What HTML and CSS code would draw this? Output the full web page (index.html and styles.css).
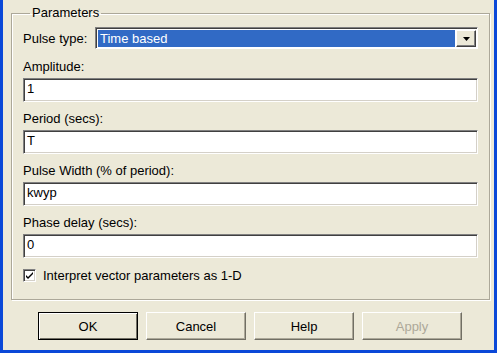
FILE: index.html
```html
<!DOCTYPE html>
<html lang="en">
<head>
  <meta charset="UTF-8" />
  <title>Block Parameters: Pulse Generator</title>
  <link rel="stylesheet" href="styles.css">
</head>
<body>
  <div class="window">
    <!-- Parameters group -->
    <fieldset class="group">
      <legend>Parameters</legend>

      <div class="row">
        <label class="row-label">Pulse type:</label>
        <div class="combo">
          <span class="combo-value">Time based</span>
          <span class="combo-btn">
            <svg width="7" height="4" viewBox="0 0 7 4"><path d="M0 0h7L3.5 4z" fill="#000"/></svg>
          </span>
        </div>
      </div>

      <div class="field">
        <label>Amplitude:</label>
        <div class="edit">1</div>
      </div>
      <div class="field">
        <label>Period (secs):</label>
        <div class="edit">T</div>
      </div>
      <div class="field">
        <label>Pulse Width (% of period):</label>
        <div class="edit">kwyp</div>
      </div>
      <div class="field">
        <label>Phase delay (secs):</label>
        <div class="edit">0</div>
      </div>

      <div class="check">
        <span class="check-box">
          <svg width="9" height="9" viewBox="0 0 9 9"><path d="M1 4l2 2 5-5v2l-5 5-2-2z" fill="#000"/></svg>
        </span>
        <span>Interpret vector parameters as 1-D</span>
      </div>
    </fieldset>

    <!-- Dialog buttons -->
    <div class="buttons">
      <button class="default">OK</button>
      <button>Cancel</button>
      <button>Help</button>
      <button class="disabled">Apply</button>
    </div>
  </div>
</body>
</html>
```

FILE: styles.css
```css
html, body {
  margin: 0;
  padding: 0;
}

body {
  font-family: "Liberation Sans", Arial, sans-serif;
  font-size: 13px;
  color: #000;
}

.window {
  box-sizing: border-box;
  width: 497px;
  height: 353px;
  padding-top: 5px;
  background: #ece9d8;
  border-left: 3px solid #0a48d8;
  border-right: 3px solid #0a48d8;
  border-bottom: 3px solid #0a48d8;
}

.group {
  margin: 0 4px 0 8px;
  padding: 6px 11px 0 11px;
  height: 295px;
  box-sizing: border-box;
  border: 1px solid #aca899;
  box-shadow: inset 1px 1px #fff, 1px 1px #fff;
}

.group legend {
  margin-left: 7px;
  padding: 0 2px;
  line-height: 16px;
}

.row {
  display: flex;
  align-items: center;
  gap: 7px;
  height: 22px;
}

.row-label {
  width: 65px;
}

.combo {
  flex: 1;
  display: flex;
  height: 22px;
  box-sizing: border-box;
  border-top: 1px solid #808080;
  border-left: 1px solid #808080;
  border-right: 1px solid #fff;
  border-bottom: 1px solid #fff;
  box-shadow: inset 1px 1px #404040;
  background: #fff;
  padding: 2px 1px 1px 2px;
}

.combo-value {
  flex: 1;
  background: #316ac5;
  color: #fff;
  line-height: 17px;
  padding-left: 2px;
}

.combo-btn {
  width: 20px;
  display: flex;
  align-items: center;
  justify-content: center;
  box-sizing: border-box;
  margin-left: 1px;
  background: #ece9d8;
  border-top: 1px solid #fff;
  border-left: 1px solid #fff;
  border-right: 1px solid #404040;
  border-bottom: 1px solid #404040;
  box-shadow: inset -1px -1px #808080;
}

.field {
  display: flex;
  flex-direction: column;
  gap: 3px;
  margin-top: 10px;
}

.field + .field {
  margin-top: 9px;
}

.field label {
  line-height: 16px;
}

.edit {
  height: 24px;
  box-sizing: border-box;
  line-height: 20px;
  padding-left: 3px;
  background: #fff;
  border-top: 1px solid #808080;
  border-left: 1px solid #808080;
  border-right: 1px solid #fff;
  border-bottom: 1px solid #fff;
  box-shadow: inset 1px 1px #404040, inset -1px -1px #d4d0c8;
}

.check {
  display: flex;
  align-items: center;
  gap: 7px;
  margin-top: 10px;
}

.check-box {
  width: 13px;
  height: 13px;
  box-sizing: border-box;
  display: flex;
  align-items: center;
  justify-content: center;
  background: #fff;
  border-top: 1px solid #808080;
  border-left: 1px solid #808080;
  border-right: 1px solid #fff;
  border-bottom: 1px solid #fff;
  box-shadow: inset 1px 1px #404040, inset -1px -1px #d4d0c8;
}

.buttons {
  display: flex;
  gap: 8px;
  margin: 12px 0 0 35px;
}

.buttons button {
  width: 100px;
  height: 28px;
  font-family: inherit;
  font-size: 13px;
  color: #000;
  background: #ece9d8;
  border-top: 1px solid #fff;
  border-left: 1px solid #fff;
  border-right: 1px solid #716f64;
  border-bottom: 1px solid #716f64;
  box-shadow: inset -1px -1px #aca899;
  padding: 0;
}

.buttons button.default {
  border: 1px solid #000;
  box-shadow: inset 1px 1px #fff, inset -1px -1px #716f64;
}

.buttons button.disabled {
  color: #aca899;
}
```
